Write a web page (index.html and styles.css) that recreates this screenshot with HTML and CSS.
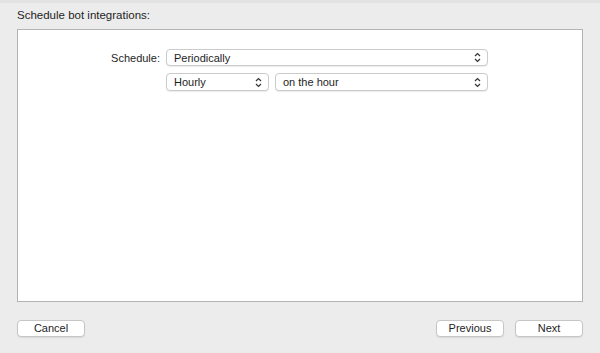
FILE: index.html
```html
<!DOCTYPE html>
<html lang="en">
<head>
    <meta charset="UTF-8">
    <title>Schedule bot integrations</title>
    <link rel="stylesheet" href="styles.css">
</head>
<body>
<div class="sheet">
    <div class="title">Schedule bot integrations:</div>
    <div class="panel">
        <div class="form">
            <label class="label">Schedule:</label>
            <div class="select wide">
                <span>Periodically</span>
                <svg class="arrows" width="7" height="11" viewBox="0 0 7 11"><path d="M1 4 L3.5 1.5 L6 4 M1 7 L3.5 9.5 L6 7" fill="none" stroke="#333" stroke-width="1.2"/></svg>
            </div>
            <div class="row">
                <div class="select short">
                    <span>Hourly</span>
                    <svg class="arrows" width="7" height="11" viewBox="0 0 7 11"><path d="M1 4 L3.5 1.5 L6 4 M1 7 L3.5 9.5 L6 7" fill="none" stroke="#333" stroke-width="1.2"/></svg>
                </div>
                <div class="select long">
                    <span>on the hour</span>
                    <svg class="arrows" width="7" height="11" viewBox="0 0 7 11"><path d="M1 4 L3.5 1.5 L6 4 M1 7 L3.5 9.5 L6 7" fill="none" stroke="#333" stroke-width="1.2"/></svg>
                </div>
            </div>
        </div>
    </div>
    <div class="buttons">
        <button class="btn">Cancel</button>
        <div class="right">
            <button class="btn">Previous</button>
            <button class="btn">Next</button>
        </div>
    </div>
</div>
</body>
</html>
```

FILE: styles.css
```css
*{
    margin: 0;
    padding: 0;
    box-sizing: border-box;
}
html,body{
    width: 100%;
    height: 100%;
}
body{
    background: #ececec;
    font-family: "Liberation Sans", Arial, sans-serif;
    color: #1e1e1e;
    font-size: 11px;
}
.sheet{
    display: flex;
    flex-direction: column;
    height: 353px;
    padding: 0 17px;
    border-top: 3px solid #e2e2e2;
}
.title{
    font-size: 11.5px;
    height: 26px;
    line-height: 13px;
    padding-top: 6px;
}
.panel{
    height: 273px;
    background: #fff;
    border: 1px solid #b3b3b3;
    padding-top: 19px;
}
.form{
    display: grid;
    grid-template-columns: 142px 322px;
    column-gap: 6px;
    row-gap: 7px;
    align-items: center;
}
.label{
    text-align: right;
}
.select{
    display: flex;
    align-items: center;
    justify-content: space-between;
    height: 17px;
    background: #fff;
    border: 1px solid #cbcbcb;
    border-radius: 4px;
    box-shadow: 0 1px 1px rgba(0,0,0,0.08);
    padding: 0 6px 0 7px;
}
.row{
    grid-column: 2;
    display: flex;
    gap: 6px;
}
.select.short{
    width: 103px;
    height: 18px;
}
.select.long{
    width: 213px;
    height: 18px;
}
.buttons{
    display: flex;
    justify-content: space-between;
    margin-top: 18px;
}
.right{
    display: flex;
    gap: 11px;
}
.btn{
    width: 68px;
    height: 17px;
    background: #fff;
    border: 1px solid #c6c6c6;
    border-radius: 4px;
    box-shadow: 0 1px 1px rgba(0,0,0,0.08);
    font-family: "Liberation Sans", Arial, sans-serif;
    font-size: 11px;
    color: #1e1e1e;
    line-height: 15px;
}
```
